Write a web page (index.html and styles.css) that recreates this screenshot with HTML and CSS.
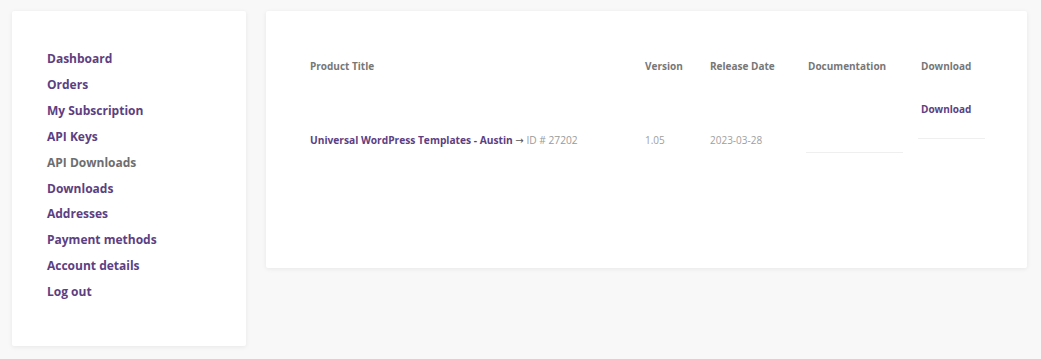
FILE: index.html
```html
<html>
<head>
    <link rel="stylesheet" href="styles.css">
</head>
<body>
    <div id="page">
        <nav id="sidebar" class="card">
            <ul class="menu">
                <li><a href="#">Dashboard</a></li>
                <li><a href="#">Orders</a></li>
                <li><a href="#">My Subscription</a></li>
                <li><a href="#">API Keys</a></li>
                <li class="active"><a href="#">API Downloads</a></li>
                <li><a href="#">Downloads</a></li>
                <li><a href="#">Addresses</a></li>
                <li><a href="#">Payment methods</a></li>
                <li><a href="#">Account details</a></li>
                <li><a href="#">Log out</a></li>
            </ul>
        </nav>
        <div id="content" class="card">
            <table class="downloads">
                <thead>
                    <tr>
                        <th class="col-title">Product Title</th>
                        <th class="col-version">Version</th>
                        <th class="col-date">Release Date</th>
                        <th class="col-doc">Documentation</th>
                        <th class="col-download">Download</th>
                    </tr>
                </thead>
                <tbody>
                    <tr>
                        <td class="col-title"><a href="#">Universal WordPress Templates - Austin</a> <span class="arrow">&rarr;</span> <span class="meta">ID # 27202</span></td>
                        <td class="col-version">1.05</td>
                        <td class="col-date">2023-03-28</td>
                        <td class="col-doc"><div class="doc-line"></div></td>
                        <td class="col-download"><a href="#">Download</a><div class="dl-line"></div></td>
                    </tr>
                </tbody>
            </table>
        </div>
    </div>
</body>
</html>
```

FILE: styles.css
```css
html,
body {
    margin: 0px;
    width: 100%;
    height: 100%;
    background: #f8f8f8;
    font-family: "Open Sans", "Noto Sans", sans-serif;
}

a {
    color: #5c4082;
    text-decoration: none;
    font-weight: 700;
}

#page {
    display: flex;
    align-items: flex-start;
    gap: 20px;
    padding: 11px 14px 0px 12px;
}

.card {
    background: #ffffff;
    border-radius: 2px;
    box-shadow: 0 1px 5px rgba(0, 0, 0, 0.07);
}

#sidebar {
    width: 234px;
    height: 335px;
    box-sizing: border-box;
    padding: 35px 0px 0px 35px;
    flex-shrink: 0;
}

.menu {
    list-style: none;
    margin: 0px;
    padding: 0px;
}

.menu li {
    font-size: 12px;
    line-height: 25.9px;
}

.menu li.active a {
    color: #6e6e6e;
}

#content {
    flex: 1;
    height: 257px;
    box-sizing: border-box;
    padding: 45px 0px 0px 44px;
}

.downloads {
    border-collapse: collapse;
    table-layout: fixed;
    width: 678px;
    font-size: 10px;
}

.downloads th {
    text-align: left;
    font-weight: 700;
    color: #777777;
    line-height: 20px;
    padding: 0px;
}

.downloads td {
    vertical-align: top;
    padding: 55px 0px 0px 0px;
    line-height: 18px;
    color: #9e9e9e;
}

.downloads td.col-title {
    font-size: 10.2px;
}

.downloads td a {
    font-size: inherit;
}

.col-title {
    width: 335px;
}

.col-version {
    width: 65px;
}

.col-date {
    width: 98px;
}

.col-doc {
    width: 113px;
}

.col-download {
    width: 67px;
}

.downloads td.col-download {
    padding-top: 24px;
}

.arrow {
    font-family: "DejaVu Sans", sans-serif;
    font-size: 10px;
    color: #555555;
}

.meta {
    color: #9a9a9a;
}

.doc-line {
    width: 97px;
    margin-left: -2px;
    height: 21px;
    border-bottom: 1px solid #efefef;
}

.dl-line {
    width: 67px;
    margin-left: -3px;
    height: 20px;
    border-bottom: 1px solid #efefef;
}
```
